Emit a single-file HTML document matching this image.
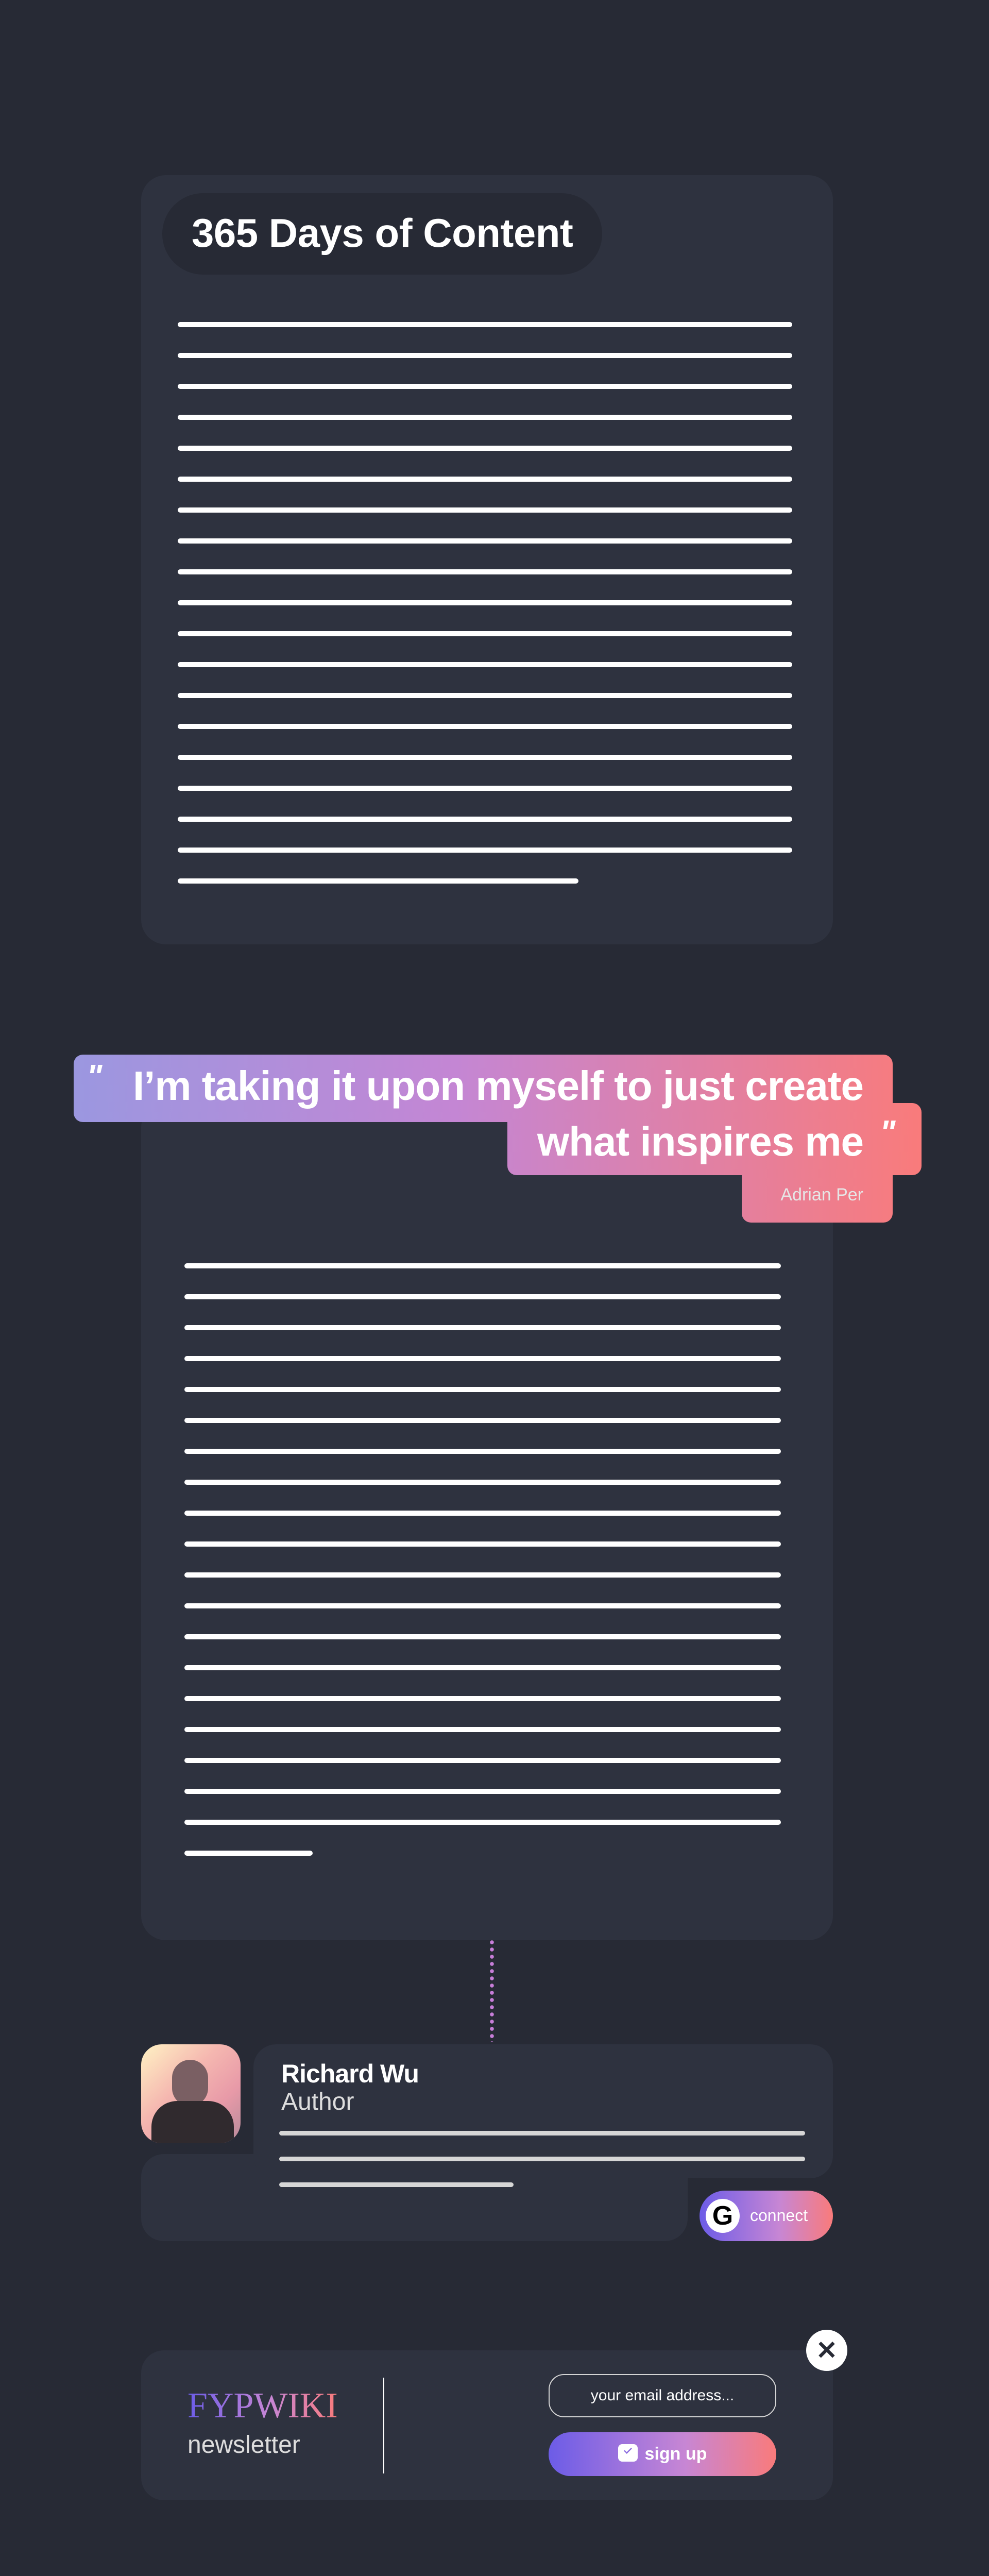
<!DOCTYPE html>
<html><head><meta charset="utf-8">
<style>
*{margin:0;padding:0;box-sizing:border-box}
html,body{width:1920px;height:5225px;background:#272a35;overflow:hidden;font-family:"Liberation Sans",sans-serif;position:relative}
.abs{position:absolute}
.card{background:#2e323f;border-radius:48px}
.line{position:absolute;height:10px;border-radius:5px;background:#fff}
.grad{background:linear-gradient(90deg,#9b97e0 0%,#c486d4 45%,#f97b7b 100%)}
</style></head><body>

<!-- Card 1 -->
<div class="abs card" style="left:274px;top:340px;width:1343px;height:1493px"></div>
<div class="abs" style="left:315px;top:375px;width:854px;height:158px;border-radius:79px;background:#272a35"></div>
<div class="abs" style="left:372px;top:402px;font-size:78px;font-weight:bold;color:#fff;letter-spacing:-0.5px;line-height:100px;white-space:nowrap">365 Days of Content</div>
<div id="l1"></div>

<!-- Card 2 -->
<div class="abs card" style="left:274px;top:2140px;width:1343px;height:1626px"></div>
<div id="l2"></div>

<!-- Quote -->
<div class="abs" style="left:143px;top:2047px;width:1646px;height:326px">
  <div class="abs grad" style="left:0;top:0;width:1590px;height:131px;border-radius:18px;background-size:1646px 100%"></div>
  <div class="abs grad" style="left:842px;top:94px;width:804px;height:140px;border-radius:18px;background-size:1646px 100%;background-position:-842px 0"></div>
  <div class="abs grad" style="left:1297px;top:200px;width:293px;height:126px;border-radius:18px;background-size:1646px 100%;background-position:-1297px 0"></div>
</div>
<div class="abs" style="left:168px;top:2052px;font-size:64px;font-weight:bold;color:#fff;font-style:italic">"</div>
<div class="abs" style="left:1708px;top:2160px;font-size:64px;font-weight:bold;color:#fff;font-style:italic">"</div>
<div class="abs" style="right:244px;top:2064px;font-size:80px;font-weight:bold;color:#fff;letter-spacing:-1px;white-space:nowrap;line-height:88px">I’m taking it upon myself to just create</div>
<div class="abs" style="right:244px;top:2172px;font-size:80px;font-weight:bold;color:#fff;letter-spacing:-1px;white-space:nowrap;line-height:88px">what inspires me</div>
<div class="abs" style="right:244px;top:2297px;font-size:34px;color:#e6e6e6;white-space:nowrap;line-height:44px">Adrian Per</div>

<!-- dotted -->
<div class="abs" style="left:951px;top:3766px;width:8px;height:198px;background:radial-gradient(circle at 4px 4px,#c77dd8 3.5px,transparent 4px) 0 0/8px 14px repeat-y"></div>

<!-- Author -->
<div class="abs card" style="left:274px;top:4181px;width:1061px;height:169px;border-radius:44px"></div>
<div class="abs card" style="left:492px;top:3968px;width:1125px;height:260px;border-radius:44px"></div>
<div class="abs" style="left:274px;top:3968px;width:193px;height:192px;border-radius:40px;overflow:hidden;background:linear-gradient(135deg,#fff3c4 0%,#f5b7b0 40%,#e89aa8 70%,#b78a9a 100%)">
  <div class="abs" style="left:60px;top:30px;width:70px;height:90px;border-radius:35px;background:#7a5f63"></div>
  <div class="abs" style="left:20px;top:110px;width:160px;height:100px;border-radius:50px 50px 0 0;background:#302a2e"></div>
</div>
<div class="abs" style="left:546px;top:3996px;font-size:50px;font-weight:bold;color:#fff;line-height:58px;letter-spacing:-1px">Richard Wu</div>
<div class="abs" style="left:546px;top:4052px;font-size:48px;color:#ddd;line-height:56px">Author</div>
<div class="abs" style="left:542px;top:4136px;width:1021px;height:9px;border-radius:5px;background:#d6d6d6"></div>
<div class="abs" style="left:542px;top:4186px;width:1021px;height:9px;border-radius:5px;background:#d6d6d6"></div>
<div class="abs" style="left:542px;top:4236px;width:455px;height:9px;border-radius:5px;background:#d6d6d6"></div>
<div class="abs" style="left:1358px;top:4252px;width:259px;height:98px;border-radius:49px;background:linear-gradient(90deg,#6c5ce7,#c786d4 60%,#f97b7b)"></div>
<div class="abs" style="left:1370px;top:4268px;width:66px;height:66px;border-radius:50%;background:#fff;font-size:52px;font-weight:bold;color:#000;text-align:center;line-height:66px">G</div>
<div class="abs" style="left:1456px;top:4280px;font-size:32px;color:#fff;line-height:40px">connect</div>

<!-- Newsletter -->
<div class="abs card" style="left:274px;top:4562px;width:1343px;height:291px;border-radius:44px"></div>
<div class="abs" style="left:1565px;top:4522px;width:80px;height:80px;border-radius:50%;background:#fff;color:#272a35;font-size:50px;font-weight:bold;text-align:center;line-height:80px">✕</div>
<div class="abs" style="left:364px;top:4630px;font-family:'Liberation Serif',serif;font-size:70px;line-height:80px;background:linear-gradient(90deg,#6c5ce7,#c786d4 55%,#f97b7b);-webkit-background-clip:text;background-clip:text;color:transparent">FYPWIKI</div>
<div class="abs" style="left:364px;top:4716px;font-size:48px;color:#ddd;line-height:60px">newsletter</div>
<div class="abs" style="left:744px;top:4615px;width:2px;height:186px;background:#fff"></div>
<div class="abs" style="left:1065px;top:4608px;width:442px;height:84px;border:2px solid #d4d4d4;border-radius:30px;color:#fff;font-size:30px;text-align:center;line-height:80px">your email address...</div>
<div class="abs" style="left:1065px;top:4721px;width:442px;height:85px;border-radius:42px;background:linear-gradient(90deg,#6c5ce7,#c786d4 60%,#f97b7b);color:#fff;font-size:34px;font-weight:bold;line-height:85px;text-align:center">
  <span style="display:inline-block;width:38px;height:34px;background:#fff;border-radius:8px;vertical-align:-4px;margin-right:14px;position:relative"><span style="position:absolute;left:10px;top:6px;width:18px;height:10px;border-left:3px solid #8b6be0;border-bottom:3px solid #8b6be0;transform:rotate(-45deg) scale(0.8)"></span></span>sign up</div>

<script>
(function(){
 var h='';
 for(var i=0;i<18;i++) h+='<div class="line" style="left:345px;top:'+(625+i*60)+'px;width:1193px"></div>';
 h+='<div class="line" style="left:345px;top:'+(625+18*60)+'px;width:778px"></div>';
 document.getElementById('l1').outerHTML=h;
 var g='';
 for(var j=0;j<19;j++) g+='<div class="line" style="left:358px;top:'+(2452+j*60)+'px;width:1158px"></div>';
 g+='<div class="line" style="left:358px;top:'+(2452+19*60)+'px;width:249px"></div>';
 document.getElementById('l2').outerHTML=g;
})();
</script>
</body></html>
